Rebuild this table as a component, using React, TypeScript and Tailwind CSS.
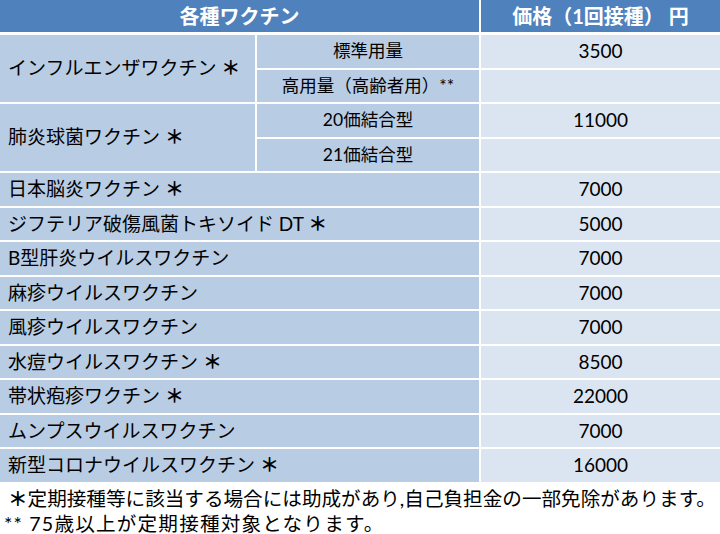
const jp = "font-['Lato','Noto_Sans_CJK_JP',sans-serif]";

interface SingleRow {
  name: string;
  price: string;
}

const singles: SingleRow[] = [
  { name: '日本脳炎ワクチン ＊', price: '7000' },
  { name: 'ジフテリア破傷風菌トキソイド DT ＊', price: '5000' },
  { name: 'B型肝炎ウイルスワクチン', price: '7000' },
  { name: '麻疹ウイルスワクチン', price: '7000' },
  { name: '風疹ウイルスワクチン', price: '7000' },
  { name: '水痘ウイルスワクチン ＊', price: '8500' },
  { name: '帯状疱疹ワクチン ＊', price: '22000' },
  { name: 'ムンプスウイルスワクチン', price: '7000' },
  { name: '新型コロナウイルスワクチン ＊', price: '16000' },
];

// the star mark is heavier than the kana around it
function Label({ text }: { text: string }) {
  const parts = text.split('＊');
  return (
    <span>
      {parts[0]}
      {parts.length > 1 && <span className="font-bold">＊</span>}
      {parts[1]}
    </span>
  );
}

function GroupRow({ name, subs, price }: { name: string; subs: string[]; price: string }) {
  return (
    <div className="flex gap-[2px]">
      <div className="flex w-[255px] items-center bg-[#b8cce4] pl-[8px] text-[19px]">
        <Label text={name} />
      </div>
      <div className="flex w-[222px] flex-col gap-[2px]">
        {subs.map((s) => (
          <div key={s} className="flex h-[32.5px] items-center justify-center bg-[#b8cce4] text-[17.5px]">
            {s}
          </div>
        ))}
      </div>
      <div className="flex flex-1 flex-col gap-[2px]">
        <div className="flex h-[32.5px] items-center justify-center bg-[#dbe5f1] text-[19px]">{price}</div>
        <div className="h-[32.5px] bg-[#dbe5f1]" />
      </div>
    </div>
  );
}

export default function App() {
  return (
    <div className={`h-[534px] w-[720px] overflow-hidden bg-white text-black ${jp}`}>
      {/* header */}
      <div className="flex h-[32px] gap-[2px] text-[20px] font-bold text-white">
        <div className="flex w-[479px] items-center justify-center bg-[#4f81bd]">各種ワクチン</div>
        <div className="flex flex-1 items-center justify-center bg-[#4f81bd]">価格（1回接種） 円</div>
      </div>

      <div className="mt-[3px] flex flex-col gap-[2px]">
        <GroupRow name="インフルエンザワクチン ＊" subs={['標準用量', '高用量（高齢者用）**']} price="3500" />
        <GroupRow name="肺炎球菌ワクチン ＊" subs={['20価結合型', '21価結合型']} price="11000" />
        {singles.map((r) => (
          <div key={r.name} className="flex h-[32.5px] gap-[2px] text-[19px]">
            <div className="flex w-[479px] items-center bg-[#b8cce4] pl-[8px]">
              <Label text={r.name} />
            </div>
            <div className="flex flex-1 items-center justify-center bg-[#dbe5f1]">{r.price}</div>
          </div>
        ))}
      </div>

      {/* notes */}
      <div className="mt-[4px] text-[19.6px] leading-[25px]">
        <p className="pl-[8px]">
          <span className="font-bold">＊</span>定期接種等に該当する場合には助成があり,自己負担金の一部免除があります。
        </p>
        <p className="pl-[4px] tracking-[1.2px]">** 75歳以上が定期接種対象となります。</p>
      </div>
    </div>
  );
}
